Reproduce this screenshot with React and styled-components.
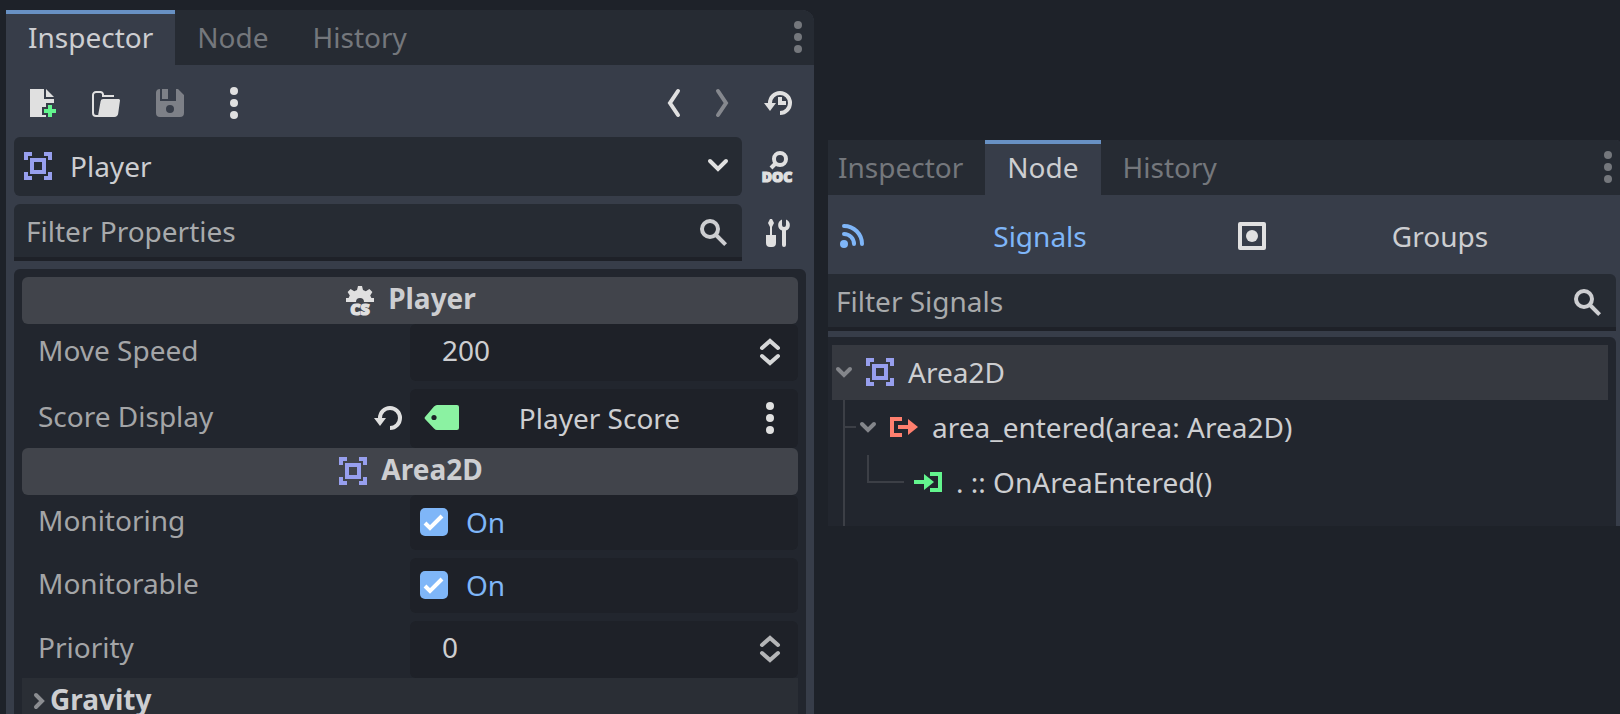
import React from "react";
import styled, { createGlobalStyle } from "styled-components";

const color = {
  page: "#1e2229",
  bar: "#262b33",
  base: "#373d49",
  tree: "#22262e",
  well: "#1e2128",
  header: "#41444b",
  group: "#2a2e35",
  selected: "#363940",
  guide: "#3c3f46",
  text: "#cdced1",
  label: "#a4a5a7",
  hint: "#a8aaac",
  dim: "#74777c",
  icon: "#e0e0e0",
  accent: "#7fb6f8",
  tabLine: "#6891c4",
  node2d: "#979fee",
  control: "#8bf2a2",
  emit: "#ff7f6e",
  slot: "#63f58e",
};

const GlobalStyle = createGlobalStyle`
  * { box-sizing: border-box; }
  body { margin: 0; background: ${color.page}; }
  body, button, input, select {
    font: 400 28px/38px "Noto Sans", sans-serif;
    color: ${color.text};
  }
  button, input, select {
    margin: 0; padding: 0; border: 0; border-radius: 0;
    background: none; outline: none; min-width: 0;
  }
  button, select { cursor: pointer; }
  ul { list-style: none; margin: 0; padding: 0; }
  svg { display: block; flex: none; overflow: visible; }
`;

/* ---------- icons ---------- */

const Icon = ({ size = 32, children, ...rest }) => (
  <svg width={size} height={size} viewBox="0 0 16 16" fill={color.icon} aria-hidden="true" {...rest}>
    {children}
  </svg>
);

const NewIcon = () => (
  <Icon>
    <path d="M2 1h7v5h5v2h-4v2H8v4h2v1H2zM10 1v4h4z" />
    <path d="M11 9h2v2h2v2h-2v2h-2v-2H9v-2h2z" fill={color.slot} />
  </Icon>
);

const LoadIcon = () => (
  <Icon>
    <path d="M4.2 14.5H3a1.500 1.500 0 0 1-1.500-1.500V4A1.500 1.500 0 0 1 3 2.500h2.200A1.300 1.300 0 0 1 6.500 3.800v.7H12" fill="none" stroke={color.icon} />
    <path d="M6.600 6h7.700a.7.7 0 0 1 .7.8l-.9 6.500A2 2 0 0 1 12.100 15H3.900L5.300 7.100A1.300 1.300 0 0 1 6.600 6z" />
  </Icon>
);

const SaveIcon = () => (
  <Icon fill="#7d8087">
    <path fillRule="evenodd" d="M3 1a2 2 0 0 0-2 2v10a2 2 0 0 0 2 2h10a2 2 0 0 0 2-2V4l-3-3h-1v6H3zM4 1h3v5H4zM8 9a2 2 0 1 0 0 4 2 2 0 0 0 0-4z" />
  </Icon>
);

const DotsIcon = ({ tint = color.icon }) => (
  <svg width="8" height="32" viewBox="0 0 4 16" fill={tint} aria-hidden="true">
    <circle cx="2" cy="2" r="2" />
    <circle cx="2" cy="8" r="2" />
    <circle cx="2" cy="14" r="2" />
  </svg>
);

const Stroke = ({ d, tint = color.icon, ...rest }) => (
  <Icon {...rest}>
    <path d={d} fill="none" stroke={tint} strokeWidth="2" strokeLinecap="round" />
  </Icon>
);

const BackIcon = () => <Stroke d="M10 2L6 8l4 6" />;
const ForwardIcon = () => <Stroke d="M6 2l4 6-4 6" tint="#85888e" />;
const DropIcon = () => <Stroke d="M4 5.500l4 4 4-4" />;
const FoldOpenIcon = () => <Stroke size={16} viewBox="0 0 8 8" d="M1 2.500l3 3 3-3" tint="#84868b" />;
const FoldClosedIcon = () => <Stroke size={16} viewBox="0 0 8 8" d="M2.500 1l3 3-3 3" tint="#8b8d91" />;

const RevertIcon = ({ children }) => (
  <Icon>
    <path d="M4 8.500V8a5 5 0 1 1 5 5" fill="none" stroke={color.icon} strokeWidth="2" />
    <path d="M1 8h6l-3 4z" />
    {children}
  </Icon>
);

const HistoryIcon = () => (
  <RevertIcon>
    <path d="M8 5h2v2h2v2H8z" />
  </RevertIcon>
);

const IconLetters = styled.text`
  font-family: "Noto Sans", sans-serif;
  font-weight: 900;
  text-anchor: middle;
  stroke: ${color.icon};
  stroke-width: 0.6;
`;

const DocIcon = () => (
  <Icon>
    <circle cx="9" cy="4" r="3" fill="none" stroke={color.icon} strokeWidth="2" />
    <path d="M7 6L4.500 8.500" stroke={color.icon} strokeWidth="2" />
    <IconLetters x="7.500" y="15.600" fontSize="7">DOC</IconLetters>
  </Icon>
);

const ScriptIcon = () => (
  <Icon>
    <path d="M7 1h2l.5 2 1.400.6 1.800-1.100 1.500 1.500-1.100 1.800.6 1.200H15v2h-5a2 2 0 1 0-4 0H1V7h1.300l.6-1.200L1.800 4l1.500-1.500 1.800 1.100L6.500 3z" />
    <IconLetters x="8" y="15.700" fontSize="8">CS</IconLetters>
  </Icon>
);

const SearchIcon = () => (
  <Icon>
    <circle cx="6" cy="6" r="4" fill="none" stroke={color.text} strokeWidth="2" />
    <path d="M9 9l4.800 4.800" stroke={color.text} strokeWidth="2" />
  </Icon>
);

const ToolsIcon = () => (
  <Icon>
    <path d="M4 1h1l1 2-1 2v4h2v4a2 2 0 0 1-2 2H4a2 2 0 0 1-2-2V9h2V5L3 3z" />
    <path d="M10 1.200A3 3 0 0 0 10 6.800V14a1 1 0 0 0 2 0V6.800a3 3 0 0 0 0-5.600V4a1 1 0 0 1-2 0z" />
  </Icon>
);

const Area2DIcon = () => (
  <Icon fill={color.node2d}>
    <path fillRule="evenodd" d="M1 1h4v2H3v2H1zM11 1h4v4h-2V3h-2zM1 11h2v2h2v2H1zM13 11h2v4h-4v-2h2zM4 4h8v8H4zM6 6v4h4V6z" />
  </Icon>
);

const TagIcon = () => (
  <svg width="35" height="26" viewBox="0 0 35 26" aria-hidden="true">
    <path d="M1 12L10 1.500Q11.500 0 13 0h20q2 0 2 2v21q0 2-2 2H13q-1.500 0-3-1.500L1 14q-1-1 0-2z" fill={color.control} />
    <circle cx="10" cy="12.500" r="2.600" fill={color.well} />
  </svg>
);

const SignalsIcon = () => (
  <Icon fill={color.accent}>
    <circle cx="4" cy="12" r="2" />
    <path d="M4 7a5 5 0 0 1 5 5M4 3a9 9 0 0 1 9 9" fill="none" stroke={color.accent} strokeWidth="2" strokeLinecap="round" />
  </Icon>
);

const GroupsIcon = () => (
  <Icon>
    <rect x="2" y="2" width="12" height="12" fill="none" stroke={color.icon} strokeWidth="2" strokeLinejoin="round" />
    <circle cx="8" cy="8" r="3" />
  </Icon>
);

const EmitIcon = () => (
  <Icon fill={color.emit}>
    <path d="M1 3h6v2H3v6h4v2H1zM5 7h5V4l5 4-5 4V9H5z" />
  </Icon>
);

const SlotIcon = () => (
  <Icon fill={color.slot}>
    <path d="M9 3h6v10H9v-2h4V5H9z" />
    <path d="M1 7h5V4l5 4-5 4V9H1z" />
  </Icon>
);

const Chevron = ({ up }) => (
  <svg width="20" height="12" viewBox="0 0 20 12" aria-hidden="true">
    <path d={up ? "M2 10l8-7 8 7" : "M2 2l8 7 8-7"} fill="none" stroke="currentColor" strokeWidth="4" strokeLinecap="round" />
  </svg>
);

/* ---------- docks ---------- */

const Workspace = styled.main`
  display: grid;
  grid-template-columns: minmax(0, 808fr) minmax(0, 792fr);
  gap: 14px;
  height: 100vh;
  overflow: hidden;
  padding: 10px 0 0 6px;
`;

const Dock = styled.section`
  display: flex;
  flex-direction: column;
  align-self: ${(p) => (p.$fill ? "stretch" : "start")};
  margin-top: ${(p) => (p.$fill ? 0 : 130)}px;
  min-height: 0;
  overflow: hidden;
  background: ${color.base};
  border-top-right-radius: ${(p) => (p.$fill ? 12 : 4)}px;
`;

const TabBar = styled.div`
  display: flex;
  flex: none;
  align-items: center;
  height: 55px;
  padding: 0 ${(p) => (p.$tight ? 8 : 12)}px 1px 0;
  background: ${color.bar};
`;

const Tab = styled.button`
  align-self: flex-start;
  height: 55px;
  padding: 0 22px 0 ${(p) => (p.$flush ? 10 : 22)}px;
  border-top: 4px solid transparent;
  border-bottom: 6px solid transparent;
  color: ${color.dim};
  &[aria-selected="true"] {
    color: ${color.text};
    background: ${color.base};
    border-top-color: ${color.tabLine};
  }
`;

const MenuButton = styled.button`
  margin-left: auto;
`;

const Tabs = ({ active, tight }) => (
  <TabBar role="tablist" $tight={tight}>
    {["Inspector", "Node", "History"].map((name, i) => (
      <Tab key={name} role="tab" aria-selected={name === active} $flush={tight && i === 0}>
        {name}
      </Tab>
    ))}
    <MenuButton aria-label="Dock options">
      <DotsIcon tint={color.dim} />
    </MenuButton>
  </TabBar>
);

const Toolbar = styled.div`
  display: flex;
  flex: none;
  gap: 8px;
  height: 72px;
  padding: 8px 8px 4px;
`;

const ToolButton = styled.button`
  display: flex;
  flex: none;
  align-items: center;
  justify-content: center;
  width: ${(p) => (p.$narrow ? 40 : 56)}px;
`;

const Spacer = styled.div`
  flex: 1;
`;

const FieldRow = styled.div`
  display: flex;
  flex: none;
  gap: 8px;
  padding: 0 8px 8px;
`;

const ObjectPicker = styled.label`
  display: flex;
  flex: 1;
  align-items: center;
  height: 59px;
  padding: 0 8px 1px;
  background: ${color.bar};
  border-radius: 6px;
`;

const ObjectSelect = styled.select`
  appearance: none;
  flex: 1;
  padding-left: 16px;
`;

const FilterField = styled.label`
  display: flex;
  flex: 1;
  align-items: center;
  height: 57px;
  padding: 0 12px 0 ${(p) => (p.$flush ? 8 : 12)}px;
  background: ${color.bar};
  border-radius: ${(p) => (p.$flush ? "0 6px 0 0" : "6px 6px 0 0")};
  box-shadow: inset 0 -4px ${color.well};
`;

const FilterInput = styled.input`
  flex: 1;
  padding-bottom: 4px;
  &::placeholder { color: ${color.hint}; opacity: 1; }
`;

const Filter = ({ name, flush }) => (
  <FilterField $flush={flush}>
    <FilterInput type="text" placeholder={name} aria-label={name} />
    <SearchIcon />
  </FilterField>
);

/* ---------- property list ---------- */

const Properties = styled.div`
  flex: 1;
  min-height: 0;
  overflow: hidden;
  margin: 0 8px;
  padding: 8px;
  background: ${color.tree};
  border-radius: 6px 6px 0 0;
`;

const Category = styled.h2`
  display: flex;
  align-items: center;
  justify-content: center;
  gap: 12px;
  height: 47px;
  margin: 0;
  padding-bottom: 1px;
  font-size: 28px;
  font-weight: 700;
  background: ${color.header};
  border-radius: 6px;
`;

const Title = styled.span`
  padding-bottom: 4px;
`;

const Row = styled.div`
  display: grid;
  grid-template-columns: 1fr 1fr;
  height: ${(p) => p.$height}px;
  & + & { margin-top: 8px; }
`;

const Name = styled.div`
  display: flex;
  align-items: center;
  justify-content: space-between;
  padding: 0 6px 1px 16px;
  color: ${color.label};
`;

const NameLabel = styled.label`
  padding-bottom: 4px;
`;

const Value = styled.div`
  display: flex;
  align-items: center;
  min-width: 0;
  padding-bottom: 1px;
  background: ${color.well};
  border-radius: 6px;
`;

const NumberInput = styled.input`
  flex: 1;
  padding: 0 0 4px 32px;
`;

const Stepper = styled.div`
  display: flex;
  flex-direction: column;
  gap: 4px;
  padding-right: 18px;
  button { color: ${(p) => (p.$soft ? "#b4b5b7" : "#d6d7d8")}; }
`;

const NodeButton = styled.button`
  display: flex;
  flex: 1;
  align-items: center;
  padding: 0 2px 0 14px;
`;

const NodeName = styled.span`
  flex: 1;
  text-align: center;
`;

const CheckLabel = styled.label`
  display: flex;
  align-items: center;
  gap: 18px;
  padding-left: 10px;
  color: ${color.accent};
`;

const CheckStack = styled.span`
  display: grid;
  > * { grid-area: 1 / 1; }
  svg { pointer-events: none; }
`;

const CheckInput = styled.input`
  appearance: none;
  width: 28px;
  height: 28px;
  border-radius: 5px;
  background: ${color.accent};
`;

const Group = styled.button`
  display: flex;
  align-items: center;
  gap: 3px;
  width: 100%;
  height: 47px;
  padding: 0 0 1px 9px;
  font-weight: 700;
  background: ${color.group};
`;

const NumberRow = ({ id, name, value, soft }) => (
  <Row $height={57}>
    <Name><NameLabel htmlFor={id}>{name}</NameLabel></Name>
    <Value>
      <NumberInput id={id} type="text" inputMode="numeric" defaultValue={value} />
      <Stepper $soft={soft}>
        <button aria-label={`Increase ${name}`}><Chevron up /></button>
        <button aria-label={`Decrease ${name}`}><Chevron /></button>
      </Stepper>
    </Value>
  </Row>
);

const CheckRow = ({ id, name }) => (
  <Row $height={55}>
    <Name><NameLabel htmlFor={id}>{name}</NameLabel></Name>
    <Value>
      <CheckLabel>
        <CheckStack>
          <CheckInput id={id} type="checkbox" defaultChecked />
          <svg width="28" height="28" viewBox="0 0 28 28" aria-hidden="true">
            <path d="M5 15l5 5L22 8" fill="none" stroke="#fff" strokeWidth="4" />
          </svg>
        </CheckStack>
        On
      </CheckLabel>
    </Value>
  </Row>
);

const InspectorDock = () => (
  <Dock $fill>
    <Tabs active="Inspector" />
    <Toolbar>
      <ToolButton aria-label="New resource"><NewIcon /></ToolButton>
      <ToolButton aria-label="Load resource"><LoadIcon /></ToolButton>
      <ToolButton aria-label="Save resource"><SaveIcon /></ToolButton>
      <ToolButton aria-label="Resource options"><DotsIcon /></ToolButton>
      <Spacer />
      <ToolButton $narrow aria-label="Back"><BackIcon /></ToolButton>
      <ToolButton $narrow aria-label="Forward"><ForwardIcon /></ToolButton>
      <ToolButton aria-label="Object history"><HistoryIcon /></ToolButton>
    </Toolbar>
    <FieldRow>
      <ObjectPicker>
        <Area2DIcon />
        <ObjectSelect aria-label="Edited object">
          <option>Player</option>
        </ObjectSelect>
        <DropIcon />
      </ObjectPicker>
      <ToolButton aria-label="Open documentation"><DocIcon /></ToolButton>
    </FieldRow>
    <FieldRow>
      <Filter name="Filter Properties" />
      <ToolButton aria-label="Manage properties"><ToolsIcon /></ToolButton>
    </FieldRow>
    <Properties>
      <Category><ScriptIcon /><Title>Player</Title></Category>
      <NumberRow id="speed" name="Move Speed" value="200" />
      <Row $height={59}>
        <Name>
          <NameLabel htmlFor="score">Score Display</NameLabel>
          <button aria-label="Revert Score Display"><RevertIcon /></button>
        </Name>
        <Value>
          <NodeButton id="score"><TagIcon /><NodeName>Player Score</NodeName></NodeButton>
          <ToolButton aria-label="Node options"><DotsIcon /></ToolButton>
        </Value>
      </Row>
      <Category><Area2DIcon /><Title>Area2D</Title></Category>
      <CheckRow id="monitoring" name="Monitoring" />
      <CheckRow id="monitorable" name="Monitorable" />
      <NumberRow id="priority" name="Priority" value="0" soft />
      <Group aria-expanded="false"><FoldClosedIcon /><Title>Gravity</Title></Group>
    </Properties>
  </Dock>
);

/* ---------- signals ---------- */

const ModeBar = styled.div`
  display: grid;
  grid-template-columns: 1fr 1fr;
  gap: 12px;
  height: 79px;
  padding: 8px 4px 5px 0;
`;

const ModeButton = styled.button`
  display: flex;
  align-items: center;
  gap: 6px;
  padding: 0 10px 0 8px;
  color: ${(p) => (p.$on ? color.accent : color.text)};
`;

const FilterStrip = styled.div`
  display: flex;
  padding: 0 4px 6px 0;
`;

const SignalTree = styled.ul`
  margin-right: 4px;
  padding: 8px 8px 0 4px;
  background: ${color.tree};
  border-top-right-radius: 6px;
`;

const TreeRow = styled.div`
  display: flex;
  align-items: center;
  gap: 12px;
  height: 55px;
  padding: 0 0 1px ${(p) => (p.$selected ? 4 : 0)}px;
  white-space: nowrap;
  background: ${(p) => (p.$selected ? color.selected : "transparent")};
`;

const Branch = styled.ul`
  margin-left: 11px;
  padding-bottom: 16px;
  border-left: 2px solid ${color.guide};
`;

const Leaves = styled.ul`
  margin-left: 22px;
`;

const Stub = styled.span`
  width: 11px;
  height: 2px;
  margin-right: -8px;
  background: ${color.guide};
`;

const Elbow = styled.span`
  align-self: flex-start;
  width: 37px;
  height: 28px;
  margin-right: -4px;
  border: solid ${color.guide};
  border-width: 0 0 2px 2px;
`;

const NodeDock = () => (
  <Dock>
    <Tabs active="Node" tight />
    <ModeBar>
      <ModeButton $on aria-pressed="true"><SignalsIcon /><NodeName>Signals</NodeName></ModeButton>
      <ModeButton aria-pressed="false"><GroupsIcon /><NodeName>Groups</NodeName></ModeButton>
    </ModeBar>
    <FilterStrip><Filter name="Filter Signals" flush /></FilterStrip>
    <SignalTree role="tree" aria-label="Signals">
      <li role="treeitem" aria-selected="true" aria-expanded="true">
        <TreeRow $selected><FoldOpenIcon /><Area2DIcon />Area2D</TreeRow>
        <Branch role="group">
          <li role="treeitem" aria-expanded="true">
            <TreeRow><Stub /><FoldOpenIcon /><EmitIcon />area_entered(area: Area2D)</TreeRow>
            <Leaves role="group">
              <li role="treeitem">
                <TreeRow><Elbow /><SlotIcon />. :: OnAreaEntered()</TreeRow>
              </li>
            </Leaves>
          </li>
        </Branch>
      </li>
    </SignalTree>
  </Dock>
);

export default function App() {
  return (
    <>
      <GlobalStyle />
      <Workspace>
        <InspectorDock />
        <NodeDock />
      </Workspace>
    </>
  );
}
